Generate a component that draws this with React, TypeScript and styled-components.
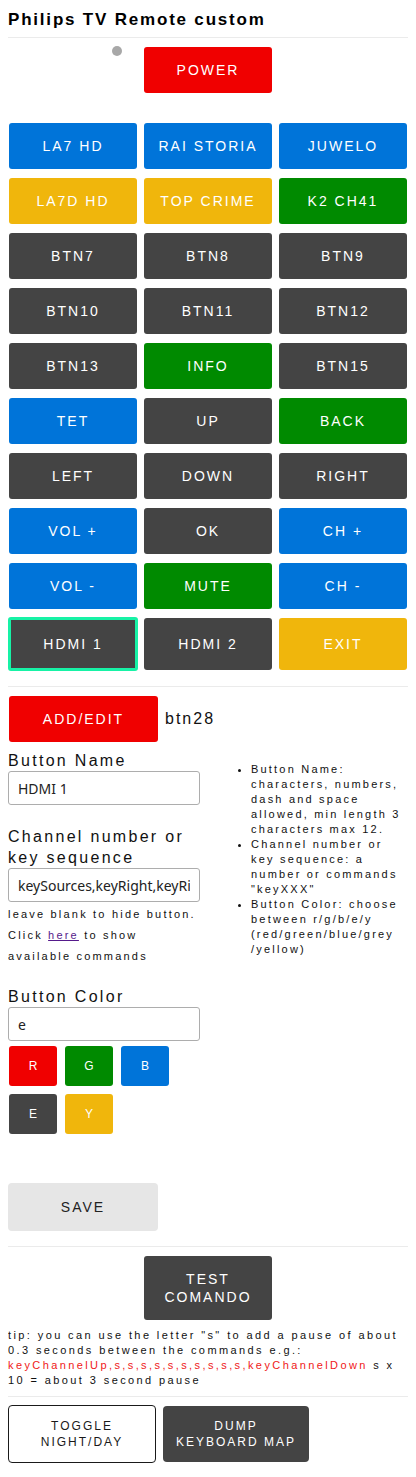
import React from "react";
import styled, { createGlobalStyle, css } from "styled-components";

const GlobalStyle = createGlobalStyle`
  html, body { padding: 0; background: #fff; }
  body {
    margin: 8px;
    font-family: "Liberation Sans", Arial, sans-serif;
    color: #111;
  }
  * { box-sizing: border-box; }
`;

type Tone = "r" | "g" | "b" | "e" | "y";

const palette: Record<Tone, string> = {
  r: "#f00000",
  g: "#008a00",
  b: "#0074d9",
  e: "#444444",
  y: "#f0b60c",
};

const Page = styled.div`
  width: 400px;
`;

const Title = styled.h1`
  margin: 1px 0 0;
  font-size: 17px;
  line-height: 22px;
  font-weight: bold;
  letter-spacing: 1.8px;
  color: #000;
`;

const Divider = styled.div<{ $top: number; $bottom: number }>`
  height: 1px;
  background: #ebebeb;
  margin-top: ${(p) => p.$top}px;
  margin-bottom: ${(p) => p.$bottom}px;
`;

const ThreeCols = styled.div<{ $top?: number; $rowGap?: number }>`
  display: grid;
  grid-template-columns: repeat(3, 128px);
  column-gap: 7px;
  row-gap: ${(p) => p.$rowGap ?? 0}px;
  padding-left: 1px;
  margin-top: ${(p) => p.$top ?? 0}px;
`;

const StatusCell = styled.div`
  display: flex;
  justify-content: flex-end;
  align-items: flex-start;
  padding-right: 15px;
`;

const StatusDot = styled.span`
  width: 10px;
  height: 10px;
  margin-top: -1px;
  border-radius: 50%;
  background: #a8a8a8;
`;

const RemoteButton = styled.button<{ $tone: Tone; $selected?: boolean; $col?: number }>`
  min-height: 46px;
  padding: 14px 4px;
  border: none;
  border-radius: 3px;
  background: ${(p) => palette[p.$tone]};
  color: #fff;
  font-family: "Liberation Sans", Arial, sans-serif;
  font-size: 14px;
  line-height: 18px;
  letter-spacing: 2px;
  text-transform: uppercase;
  text-align: center;
  cursor: pointer;
  ${(p) => p.$col && css`grid-column: ${p.$col};`}
  ${(p) =>
    p.$selected &&
    css`
      min-height: 54px;
      border: 3px solid #17f2a6;
      margin: -1px;
      padding: 15px 4px;
    `}
`;

const AddRow = styled.div`
  display: flex;
  align-items: center;
  gap: 7px;
  padding-left: 1px;
`;

const AddButton = styled(RemoteButton)`
  width: 149px;
`;

const AddId = styled.span`
  font-size: 16px;
  letter-spacing: 2px;
  color: #111;
`;

const Form = styled.div`
  display: flex;
  align-items: flex-start;
`;

const LeftCol = styled.div`
  width: 192px;
  flex: none;
  margin-top: 8px;
`;

const Label = styled.div<{ $top?: number }>`
  margin-top: ${(p) => p.$top ?? 0}px;
  font-size: 16px;
  line-height: 21px;
  letter-spacing: 2.3px;
  color: #111;
`;

const TextInput = styled.input`
  display: block;
  width: 192px;
  height: 34px;
  padding: 0 9px;
  border: 1px solid #adadad;
  border-radius: 3px;
  background: #fff;
  font-family: "Noto Sans", "Open Sans", sans-serif;
  font-size: 14px;
  color: #222;
  outline: none;
`;

const Hint = styled.div`
  margin-top: 2px;
  font-size: 11px;
  line-height: 21px;
  letter-spacing: 0.2em;
  color: #111;
`;

const Link = styled.a`
  color: #551a8b;
  text-decoration: underline;
`;

const Swatches = styled.div`
  display: flex;
  flex-wrap: wrap;
  gap: 8px;
  margin-top: 5px;
  padding-left: 1px;
`;

const Swatch = styled.button<{ $tone: Tone }>`
  width: 48px;
  height: 40px;
  border: none;
  border-radius: 3px;
  background: ${(p) => palette[p.$tone]};
  color: #fff;
  font-family: "Liberation Sans", Arial, sans-serif;
  font-size: 12px;
  padding: 0;
`;

const HelpList = styled.ul`
  margin: 20px 0 0;
  padding: 0 0 0 51px;
  flex: 1;
  font-size: 11px;
  line-height: 15px;
  letter-spacing: 0.2em;
  color: #111;
`;

const SaveButton = styled.button`
  display: block;
  width: 150px;
  height: 48px;
  margin-top: 49px;
  border: none;
  border-radius: 4px;
  background: #e6e6e6;
  color: #222;
  font-family: "Liberation Sans", Arial, sans-serif;
  font-size: 14px;
  letter-spacing: 2px;
`;

const TestButton = styled(RemoteButton)`
  min-height: 63px;
`;

const Tip = styled.p`
  margin: 8px 0 0;
  font-size: 11px;
  line-height: 15px;
  letter-spacing: 2.4px;
  color: #111;
`;

const Red = styled.span`
  color: #f01818;
`;

const BottomRow = styled.div`
  display: flex;
  align-items: center;
  gap: 7px;
`;

const ToolButton = styled.button<{ $dark?: boolean }>`
  width: ${(p) => (p.$dark ? 146 : 148)}px;
  height: ${(p) => (p.$dark ? 56 : 58)}px;
  padding: 0 10px;
  border: ${(p) => (p.$dark ? "none" : "1px solid #1a1a1a")};
  border-radius: 4px;
  background: ${(p) => (p.$dark ? "#444" : "#fff")};
  color: ${(p) => (p.$dark ? "#fff" : "#1a1a1a")};
  font-family: "Liberation Sans", Arial, sans-serif;
  font-size: 12px;
  line-height: 16px;
  letter-spacing: 2px;
  text-align: center;
`;

const buttons: { label: string; tone: Tone; selected?: boolean }[] = [
  { label: "LA7 HD", tone: "b" },
  { label: "RAI STORIA", tone: "b" },
  { label: "JUWELO", tone: "b" },
  { label: "LA7D HD", tone: "y" },
  { label: "TOP CRIME", tone: "y" },
  { label: "K2 CH41", tone: "g" },
  { label: "BTN7", tone: "e" },
  { label: "BTN8", tone: "e" },
  { label: "BTN9", tone: "e" },
  { label: "BTN10", tone: "e" },
  { label: "BTN11", tone: "e" },
  { label: "BTN12", tone: "e" },
  { label: "BTN13", tone: "e" },
  { label: "INFO", tone: "g" },
  { label: "BTN15", tone: "e" },
  { label: "TET", tone: "b" },
  { label: "UP", tone: "e" },
  { label: "BACK", tone: "g" },
  { label: "LEFT", tone: "e" },
  { label: "DOWN", tone: "e" },
  { label: "RIGHT", tone: "e" },
  { label: "VOL +", tone: "b" },
  { label: "OK", tone: "e" },
  { label: "CH +", tone: "b" },
  { label: "VOL -", tone: "b" },
  { label: "MUTE", tone: "g" },
  { label: "CH -", tone: "b" },
  { label: "HDMI 1", tone: "e", selected: true },
  { label: "HDMI 2", tone: "e" },
  { label: "EXIT", tone: "y" },
];

const swatches: Tone[] = ["r", "g", "b", "e", "y"];

export default function App() {
  return (
    <Page>
      <GlobalStyle />
      <Title>Philips TV Remote custom</Title>
      <Divider $top={6} $bottom={9} />

      <ThreeCols>
        <StatusCell>
          <StatusDot />
        </StatusCell>
        <RemoteButton $tone="r">POWER</RemoteButton>
      </ThreeCols>

      <ThreeCols $top={30} $rowGap={9}>
        {buttons.map((b) => (
          <RemoteButton key={b.label} $tone={b.tone} $selected={b.selected}>
            {b.label}
          </RemoteButton>
        ))}
      </ThreeCols>

      <Divider $top={16} $bottom={9} />

      <AddRow>
        <AddButton $tone="r">ADD/EDIT</AddButton>
        <AddId>btn28</AddId>
      </AddRow>

      <Form>
        <LeftCol>
          <Label>Button Name</Label>
          <TextInput defaultValue="HDMI 1" />
          <Label $top={21}>Channel number or key sequence</Label>
          <TextInput defaultValue="keySources,keyRight,keyRight,keyOk" />
          <Hint>
            leave blank to hide button. Click <Link href="#">here</Link> to show available commands
          </Hint>
          <Label $top={19}>Button Color</Label>
          <TextInput defaultValue="e" />
          <Swatches>
            {swatches.map((t) => (
              <Swatch key={t} $tone={t}>
                {t.toUpperCase()}
              </Swatch>
            ))}
          </Swatches>
        </LeftCol>
        <HelpList>
          <li>Button Name: characters, numbers, dash and space allowed, min length 3 characters max 12.</li>
          <li>Channel number or key sequence: a number or commands "keyXXX"</li>
          <li>Button Color: choose between r/g/b/e/y (red/green/blue/grey /yellow)</li>
        </HelpList>
      </Form>

      <SaveButton>SAVE</SaveButton>
      <Divider $top={15} $bottom={9} />

      <ThreeCols>
        <TestButton $tone="e" $col={2}>
          TEST COMANDO
        </TestButton>
      </ThreeCols>

      <Tip>
        tip: you can use the letter "s" to add a pause of about 0.3 seconds between the commands e.g.:{" "}
        <Red>keyChannelUp,s,s,s,s,s,s,s,s,s,s,keyChannelDown</Red> s x 10 = about 3 second pause
      </Tip>

      <Divider $top={8} $bottom={8} />

      <BottomRow>
        <ToolButton>TOGGLE NIGHT/DAY</ToolButton>
        <ToolButton $dark>DUMP KEYBOARD MAP</ToolButton>
      </BottomRow>
    </Page>
  );
}
